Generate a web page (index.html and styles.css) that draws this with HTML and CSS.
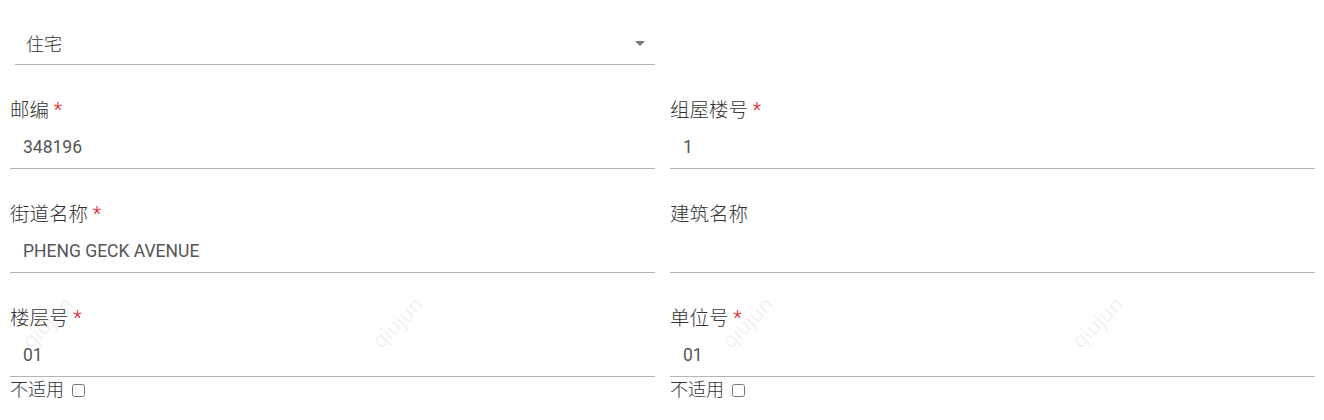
FILE: index.html
```html
<!DOCTYPE html>
<html lang="zh">
<head>
<meta charset="utf-8">
<title>地址</title>
<link rel="stylesheet" href="styles.css">
</head>
<body>
<div class="page">
  <div class="form">
    <div class="select">
      <span class="select-text">住宅</span>
      <span class="arrow"></span>
    </div>
    <div class="grid">
      <div class="field">
        <div class="label">邮编 <span class="req">*</span></div>
        <div class="input">348196</div>
      </div>
      <div class="field">
        <div class="label">组屋楼号 <span class="req">*</span></div>
        <div class="input">1</div>
      </div>
      <div class="field">
        <div class="label">街道名称 <span class="req">*</span></div>
        <div class="input">PHENG GECK AVENUE</div>
      </div>
      <div class="field">
        <div class="label">建筑名称</div>
        <div class="input"></div>
      </div>
      <div class="field">
        <div class="label">楼层号 <span class="req">*</span></div>
        <div class="input">01</div>
        <label class="na">不适用 <input type="checkbox"></label>
      </div>
      <div class="field">
        <div class="label">单位号 <span class="req">*</span></div>
        <div class="input">01</div>
        <label class="na">不适用 <input type="checkbox"></label>
      </div>
    </div>
  </div>
  <div class="wm wm1">qiujun</div>
  <div class="wm wm2">qiujun</div>
  <div class="wm wm3">qiujun</div>
  <div class="wm wm4">qiujun</div>
</div>
</body>
</html>
```
FILE: styles.css
```css
html, body {
  margin: 0;
  padding: 0;
  background: #fff;
}
.page {
  position: relative;
  width: 1324px;
  height: 420px;
  overflow: hidden;
  font-family: Roboto, "Noto Sans CJK SC", sans-serif;
}
.form {
  padding: 0 10px;
}
.select {
  margin: 21px 0 0 5px;
  width: 640px;
  height: 43px;
  border-bottom: 1px solid #b4b4b4;
  display: flex;
  align-items: center;
  justify-content: space-between;
  box-sizing: content-box;
}
.select-text {
  padding-left: 11px;
  font-size: 18px;
  color: #333;
  font-weight: 300;
}
.arrow {
  width: 0;
  height: 0;
  margin-right: 10px;
  margin-top: 1px;
  border-left: 5px solid transparent;
  border-right: 5px solid transparent;
  border-top: 5px solid #777;
}
.grid {
  display: grid;
  grid-template-columns: 645px 645px;
  column-gap: 15px;
}
.field {
  padding-top: 34px;
}
.label {
  font-size: 19.5px;
  line-height: 24px;
  color: #333;
  font-weight: 300;
}
.req {
  color: #e8141b;
}
.input {
  margin-top: 5px;
  height: 38px;
  line-height: 38px;
  padding: 0 0 2px 13px;
  font-size: 17.5px;
  color: #555;
  border-bottom: 1px solid #b4b4b4;
}
.na {
  display: flex;
  align-items: center;
  font-size: 18px;
  line-height: 26px;
  color: #333;
  font-weight: 300;
}
.na input {
  width: 13px;
  height: 13px;
  margin: 0 0 0 8px;
}
.wm {
  position: absolute;
  font-family: "Open Sans", sans-serif;
  font-size: 21px;
  color: rgba(0, 0, 0, 0.08);
  transform: translate(-50%, -50%) rotate(-45deg);
  pointer-events: none;
  top: 322px;
}
.wm1 { left: 47px; }
.wm2 { left: 397px; }
.wm3 { left: 747px; }
.wm4 { left: 1097px; }
```
